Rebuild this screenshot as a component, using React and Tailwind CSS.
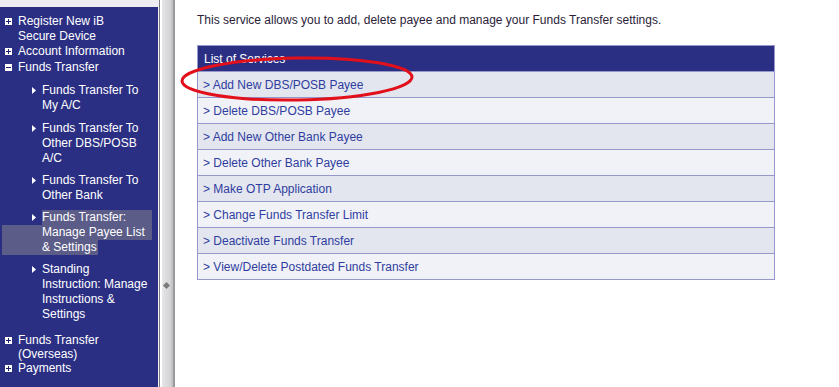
import React from "react";

const PlusBox = ({ minus }) => (
  <span className="mt-[4px] ml-[5px] mr-[6px] flex h-[7px] w-[7px] shrink-0 items-center justify-center bg-white">
    <svg width="7" height="7" viewBox="0 0 7 7">
      <rect x="1" y="3" width="5" height="1" fill="#1e2270" />
      {!minus && <rect x="3" y="1" width="1" height="5" fill="#1e2270" />}
    </svg>
  </span>
);

const Arrow = () => (
  <span className="ml-[32px] mr-[6px] mt-[4px] flex h-[7px] w-[4px] shrink-0">
    <svg width="4" height="7" viewBox="0 0 4 7">
      <polygon points="0,0 4,3.5 0,7" fill="#ffffff" />
    </svg>
  </span>
);

const TopItem = ({ minus, lines, leading = "leading-[15px]", extra = "" }) => (
  <div className={`flex ${leading} ${extra}`}>
    <PlusBox minus={minus} />
    <div>
      {lines.map((l, i) => (
        <div key={i}>{l}</div>
      ))}
    </div>
  </div>
);

const SubItem = ({ lines, extra = "" }) => (
  <div className={`flex leading-[15px] ${extra}`}>
    <Arrow />
    <div>
      {lines.map((l, i) => (
        <div key={i}>{l}</div>
      ))}
    </div>
  </div>
);

const services = [
  "Add New DBS/POSB Payee",
  "Delete DBS/POSB Payee",
  "Add New Other Bank Payee",
  "Delete Other Bank Payee",
  "Make OTP Application",
  "Change Funds Transfer Limit",
  "Deactivate Funds Transfer",
  "View/Delete Postdated Funds Transfer",
];

export default function App() {
  return (
    <div className="flex h-[387px] w-[839px] overflow-hidden bg-white font-['Liberation_Sans',Arial,sans-serif] text-[12px]">
      {/* Sidebar */}
      <div className="flex w-[158px] shrink-0 flex-col bg-[#2b2f84] text-white">
        <div className="h-[7px] bg-[#ededf2]" />
        <div className="pt-[7px]">
          <TopItem lines={["Register New iB", "Secure Device"]} />
          <TopItem lines={["Account Information"]} />
          <TopItem minus lines={["Funds Transfer"]} extra="mt-[1px]" />

          <div className="mt-[8px] flex flex-col gap-[7px]">
            <SubItem lines={["Funds Transfer To", "My A/C"]} />
            <SubItem lines={["Funds Transfer To", "Other DBS/POSB", "A/C"]} extra="mt-[1px]" />
            <SubItem lines={["Funds Transfer To", "Other Bank"]} />

            {/* selected item */}
            <div className="leading-[15px]">
              <div className="flex">
                <Arrow />
                <div className="w-[110px] bg-[#5b5c88]">Funds Transfer:</div>
              </div>
              <div className="ml-[2px] w-[150px] bg-[#5b5c88] pl-[40px]">Manage Payee List</div>
              <div className="ml-[2px] w-[96px] bg-[#5b5c88] pl-[40px]">&amp; Settings</div>
            </div>

            <SubItem lines={["Standing", "Instruction: Manage", "Instructions &", "Settings"]} />
          </div>

          <div className="mt-[11px]">
            <TopItem leading="leading-[14px]" lines={["Funds Transfer", "(Overseas)"]} />
            <TopItem leading="leading-[14px]" lines={["Payments"]} />
          </div>
        </div>
      </div>

      {/* Splitter */}
      <div className="flex w-[17px] shrink-0">
        <div className="w-[1px] bg-[#f2f2f4]" />
        <div className="w-[1px] bg-[#7a7a80]" />
        <div className="w-[2px] bg-white" />
        <div className="relative flex w-[9px] items-start justify-center bg-gradient-to-r from-[#e6e6e8] to-[#d2d2d4]">
          <span className="absolute left-[2px] top-[283px] h-[5px] w-[5px] rotate-45 bg-[#7b7b7b]" />
        </div>
        <div className="w-[2px] bg-[#c4c4c6]" />
        <div className="w-[2px] bg-[#9a9a9e]" />
      </div>

      {/* Main content */}
      <div className="relative flex-1 pl-[22px] pt-[13px]">
        <p className="leading-[14px] text-[#2a2238]">
          This service allows you to add, delete payee and manage your Funds Transfer settings.
        </p>

        <div className="mt-[18px] w-[578px] border border-[#9598c8]">
          <div className="h-[25px] bg-[#2b2f84] pl-[6px] pt-[1px] leading-[25px] text-white">List of Services</div>
          {services.map((s, i) => (
            <div
              key={s}
              className={`h-[26px] border-t border-[#9598c8] pl-[5px] pt-[1px] leading-[25px] text-[#2f3da0] ${
                i % 2 === 0 ? "bg-[#e3e6ef]" : "bg-[#f1f2f7]"
              }`}
            >
              &gt; {s}
            </div>
          ))}
        </div>

        {/* red annotation ellipse */}
        <svg className="pointer-events-none absolute left-0 top-0" width="664" height="387">
          <ellipse
            cx="122"
            cy="79"
            rx="115"
            ry="21"
            fill="none"
            stroke="#e2101b"
            strokeWidth="3"
            transform="rotate(-1 122 79)"
          />
        </svg>
      </div>
    </div>
  );
}
